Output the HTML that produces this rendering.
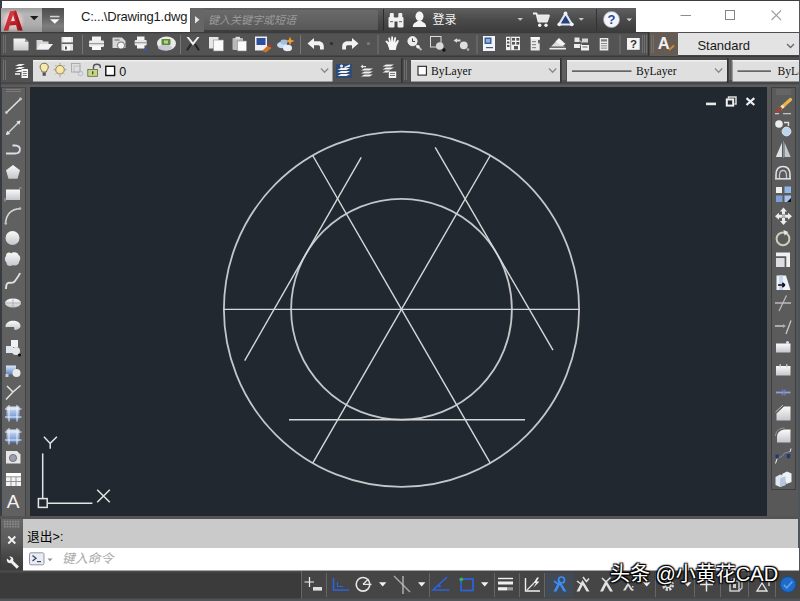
<!DOCTYPE html>
<html lang="zh-CN">
<head>
<meta charset="utf-8">
<title>AutoCAD - Drawing1.dwg</title>
<style>
html,body{margin:0;padding:0;background:#4a4a4a;}
body{width:800px;height:601px;overflow:hidden;font-family:"Liberation Sans","Noto Sans CJK SC",sans-serif;}
#app{position:relative;width:800px;height:601px;overflow:hidden;background:#585858;}
.abs{position:absolute;}
#app div,#app svg{position:absolute;}
/* title bar */
#topline{left:0;top:0;width:800px;height:1px;background:#3a3f44;}
#titlewhite{left:1px;top:1px;width:798px;height:31px;background:#fff;}
#appbtn{left:1px;top:8px;width:40.5px;height:24px;background:linear-gradient(#9c9c9c,#b6b6b6 25%,#adadad 70%,#989898);}
#qat{left:41.5px;top:8px;width:22.5px;height:24px;background:linear-gradient(#4e4e4e,#626262 40%,#7e7e7e 75%,#6e6e6e);}
#doctitle{left:81px;top:7px;height:20px;line-height:20px;font-size:13px;letter-spacing:-0.2px;color:#1a1a1a;white-space:nowrap;}
#infocenter{left:190px;top:8px;width:446px;height:24px;background:linear-gradient(#606060,#4a4a4a 50%,#3c3c3c);}
#search{left:204px;top:10px;width:174px;height:20px;background:linear-gradient(#6a6a6a,#585858);border-radius:1px;}
#searchtxt{left:208px;top:10px;height:20px;line-height:20px;font-size:11px;font-style:italic;color:#9a9a9a;white-space:nowrap;}
#login{left:432.5px;top:8.5px;height:22px;line-height:22px;font-size:12px;color:#f2f2f2;white-space:nowrap;}
#leftedge{left:0;top:0;width:1.5px;height:601px;background:#363c42;}
#rightedge{left:798px;top:32px;width:2px;height:569px;background:#4c555b;}
/* toolbars */
#tb1{left:1px;top:32px;width:798px;height:25px;background:#4e4e4e;}
#tb2{left:1px;top:57px;width:798px;height:28px;background:#4e4e4e;}
#stylebox{left:678px;top:33px;width:121px;height:22px;background:#e3e3e3;}
#styletxt{left:697.5px;top:34.5px;height:22px;line-height:22px;font-size:13px;letter-spacing:-0.05px;color:#1a1a1a;}
#layerbox{left:33px;top:60px;width:300px;height:21px;background:#dedede;}
#colorbox{left:411px;top:60px;width:148px;height:21px;background:#dedede;}
#ltbox{left:567px;top:60px;width:161px;height:21px;background:#dedede;}
#lwbox{left:733px;top:60px;width:66px;height:21px;background:#dedede;}
.mono{font-family:"Liberation Mono","Noto Sans CJK SC",monospace;}
/* canvas */
#canvas{left:30px;top:87px;width:737px;height:429px;background:#212830;}
#lefttb{left:2px;top:87px;width:24px;height:429px;background:#606060;border-right:1px solid #444;border-top:1px solid #4a4a4a;box-sizing:border-box;}
#righttb{left:771px;top:87px;width:25px;height:403px;background:#5b5b5b;border:1px solid #3f3f3f;box-sizing:border-box;}
/* command */
#cmdhandle{left:1px;top:519px;width:22.5px;height:51.5px;background:linear-gradient(#686868,#5a5a5a 45%,#444 75%,#3c3c3c);}
#cmdhist{left:23px;top:519px;width:775px;height:29px;background:#cacaca;}
#cmdin{left:23px;top:548px;width:776px;height:23px;background:#fff;}
#histtxt{left:27px;top:527px;height:20px;line-height:20px;font-size:12.7px;color:#000;white-space:nowrap;letter-spacing:0;}
#histtxt span{position:static;font-family:"Liberation Sans",sans-serif;font-size:12.5px;letter-spacing:0.3px;}
#cmdph{left:62px;top:549px;height:20px;line-height:20px;font-size:12.8px;font-style:italic;color:#a8a8a8;white-space:nowrap;}
#status{left:0;top:571px;width:800px;height:30px;background:#3b3b3b;}
#wm{left:610px;top:561px;height:26px;line-height:26px;font-size:20px;color:#fff;white-space:nowrap;text-shadow:1px 1px 1px #000,-1px -1px 1px #000,1px -1px 1px #000,-1px 1px 1px #000,0 0 3px #000;}
</style>
</head>
<body>
<div id="app">
  <div id="titlewhite"></div>
  <div id="topline"></div>
  <div id="leftedge"></div>
  <div id="rightedge"></div>
  <div id="appbtn"></div>
  <div id="qat"></div>
  <div id="doctitle">C:...\Drawing1.dwg</div>
  <div id="infocenter"></div>
  <div id="search"></div>
  <div id="searchtxt">键入关键字或短语</div>
  <div id="login">登录</div>
  <div id="tb1"></div>
  <div id="tb2"></div>
  <div id="stylebox"></div>
  <div id="styletxt">Standard</div>
  <div id="layerbox"></div>
  <div id="colorbox"></div>
  <div id="ltbox"></div>
  <div id="lwbox"></div>
  <div id="canvas"></div>
  <div id="lefttb"></div>
  <div id="righttb"></div>
  <div id="cmdhandle"></div>
  <div id="cmdhist"></div>
  <div id="cmdin"></div>
  <div id="histtxt" class="mono">退出<span>&gt;:</span></div>
  <div id="cmdph">键入命令</div>
  <div id="status"></div>
  <svg id="drawing" style="left:30px;top:87px" width="737" height="429" viewBox="30 87 737 429" fill="none" stroke="#d6d8da" stroke-width="1.4" stroke-linecap="butt">
    <circle cx="401.5" cy="309.3" r="177.6" stroke="#c4c6c9" stroke-width="1.8"/>
    <circle cx="401.5" cy="309.3" r="110.4" stroke="#c4c6c9" stroke-width="1.8"/>
    <line x1="223.9" y1="309.40000000000003" x2="579.1" y2="309.40000000000003"/>
    <line x1="312.7" y1="155.5" x2="490.3" y2="463.1"/>
    <line x1="490.3" y1="155.5" x2="312.7" y2="463.1"/>
    <line x1="361.2" y1="157.4" x2="244.7" y2="360.6"/>
    <line x1="435.2" y1="147.4" x2="553" y2="350.2"/>
    <line x1="289" y1="419.8" x2="525" y2="419.8"/>
  </svg>
  <svg id="ucs" style="left:30px;top:425px" width="100" height="91" viewBox="30 425 100 91" fill="none" stroke="#e4e4e4" stroke-width="1.5">
    <path d="M43.9 436.8 L50.2 443.4 L56.9 436.8 M50.2 443.4 V448.8"/>
    <path d="M42.7 453.4 V498.5"/>
    <rect x="38.4" y="498.6" width="8.8" height="8.8"/>
    <path d="M47.3 503.2 H92.4"/>
    <path d="M97.2 489.8 L109.8 502.2 M109.8 489.8 L97.2 502.2"/>
  </svg>
  <svg id="ic_title" style="left:0;top:0" width="800" height="33" viewBox="0 0 800 33">
    <defs>
      <linearGradient id="gA" x1="0" y1="0" x2="0" y2="1"><stop offset="0" stop-color="#d83a42"/><stop offset="1" stop-color="#a3121a"/></linearGradient>
      <radialGradient id="gGlow"><stop offset="0" stop-color="#fbe4e5" stop-opacity="0.95"/><stop offset="0.7" stop-color="#f0c8ca" stop-opacity="0.6"/><stop offset="1" stop-color="#d8b4b6" stop-opacity="0"/></radialGradient>
    </defs>
    <!-- app logo A -->
    <ellipse cx="13" cy="20.5" rx="12.5" ry="11.5" fill="url(#gGlow)"/>
    <path d="M3.8 30.6 L10.2 11.2 L16 10.4 L22.6 30.6 L17.6 30.6 L16 25 L9.6 25.6 L8.2 30.6 Z M10.9 21.3 L14.9 20.9 L13 14.6 Z" fill="url(#gA)" fill-rule="evenodd"/>
    <path d="M10.2 11.2 L16 10.4 L13 14.6 L10.9 21.3 L8.2 30.6 L3.8 30.6 Z" fill="#d93a42" opacity="0.55"/>
    <path d="M16 10.4 L22.6 30.6 L19.6 30.6 L14 12.8 Z" fill="#8e0f16" opacity="0.5"/>
    <path d="M30 16 H38.5 L34.2 20.2 Z" fill="#1c1c1c"/>
    <!-- qat dropdown -->
    <rect x="50" y="15.8" width="9.5" height="1.5" fill="#d4d4d4"/>
    <path d="M50 19.3 H59.5 L54.8 23.8 Z" fill="#fafafa"/>
    <!-- search expander -->
    <rect x="190.5" y="8" width="13.5" height="24" fill="#666"/>
    <path d="M195 16 L199.5 19.7 L195 23.4 Z" fill="#e6e6e6"/>
    <!-- separators -->
    <rect x="383" y="9" width="1" height="22" fill="#2c2c2c"/>
    <rect x="596" y="9" width="1" height="22" fill="#333"/>
    <!-- binoculars -->
    <g fill="#f0f0f0">
      <rect x="388.5" y="17" width="6" height="10.5" rx="1"/>
      <rect x="397.5" y="17" width="6" height="10.5" rx="1"/>
      <rect x="389.8" y="13" width="4" height="5" rx="1"/>
      <rect x="398.3" y="13" width="4" height="5" rx="1"/>
      <rect x="393.5" y="17.5" width="5" height="4"/>
    </g>
    <rect x="390" y="21" width="3" height="1.2" fill="#777"/><rect x="399" y="21" width="3" height="1.2" fill="#777"/>
    <!-- person -->
    <ellipse cx="419.5" cy="16.3" rx="4" ry="4.8" fill="#f4f4f4"/>
    <path d="M412.8 27 C413 22.5 416 22.8 417.6 21 H421.4 C423 22.8 426 22.5 426.2 27 Z" fill="#f4f4f4"/>
    <!-- small dropdowns -->
    <path d="M517.5 18 H523 L520.2 20.8 Z" fill="#c8c8c8"/>
    <path d="M578.5 18 H584 L581.2 20.8 Z" fill="#c8c8c8"/>
    <path d="M626.5 18.5 H632 L629.2 21.3 Z" fill="#d8d8d8"/>
    <!-- cart -->
    <path d="M533 13.5 H536.5 L538.5 21.5 H547 L549 15.5 H537.3" fill="none" stroke="#f2f2f2" stroke-width="1.8" stroke-linejoin="round"/>
    <path d="M537.6 15.5 H549 L547 21.5 H538.8 Z" fill="#e8e8e8"/>
    <circle cx="539.7" cy="25.3" r="1.7" fill="#f2f2f2"/><circle cx="546" cy="25.3" r="1.7" fill="#f2f2f2"/>
    <!-- A360 -->
    <path d="M565.5 13.5 L572 24.5 H559 Z" fill="#27407a" stroke="#dfe6f4" stroke-width="2.2" stroke-linejoin="round"/>
    <circle cx="565.5" cy="13.5" r="1.9" fill="#eef2fa"/><circle cx="559.3" cy="24.3" r="1.9" fill="#eef2fa"/><circle cx="571.8" cy="24.3" r="1.9" fill="#eef2fa"/>
    <!-- help -->
    <circle cx="611.5" cy="19.5" r="8" fill="#f3f5fa" stroke="#9aa3b8" stroke-width="0.8"/>
    <text x="611.5" y="24.3" font-family="Liberation Sans, sans-serif" font-weight="bold" font-size="13" text-anchor="middle" fill="#2748a0">?</text>
    <!-- window controls -->
    <rect x="680.5" y="15" width="10.5" height="1" fill="#8c8c8c"/>
    <rect x="725.5" y="10.5" width="9" height="9" fill="none" stroke="#858585" stroke-width="1"/>
    <path d="M771.5 10.5 L781 20 M781 10.5 L771.5 20" stroke="#a0a0a0" stroke-width="1.1"/>
  </svg>
  <svg id="ic_tb1" style="left:0;top:32px" width="800" height="26" viewBox="0 32 800 26">
    <defs>
      <linearGradient id="gW" x1="0" y1="0" x2="0" y2="1"><stop offset="0" stop-color="#f6f6f6"/><stop offset="1" stop-color="#c9c9c9"/></linearGradient>
    </defs>
    <!-- toolbar frames -->
    <rect x="1" y="32" width="648" height="24" fill="#535353"/>
    <rect x="1" y="55.5" width="798" height="1.5" fill="#3a3a3a"/>
    <rect x="1" y="32" width="677" height="1.2" fill="#3b3b3b"/>
    <rect x="649" y="32" width="29" height="24" fill="#645c54"/>
    <rect x="648" y="32" width="1.5" height="24" fill="#333"/>
    <g fill="#6f6f6f"><rect x="3" y="35" width="1" height="18"/><rect x="5" y="35" width="1" height="18"/><rect x="642" y="35" width="1" height="18"/><rect x="644" y="35" width="1" height="18"/><rect x="646" y="35" width="1" height="18"/><rect x="651" y="35" width="1" height="18"/><rect x="653" y="35" width="1" height="18"/></g>
    <!-- separators -->
    <g fill="#777"><rect x="82" y="35" width="1" height="19"/><rect x="180" y="35" width="1" height="19"/><rect x="300" y="35" width="1" height="19"/><rect x="377.5" y="35" width="1" height="19"/><rect x="476.5" y="35" width="1" height="19"/><rect x="619.5" y="35" width="1" height="19"/></g>
    <!-- new -->
    <path d="M13.5 38.5 H25 L28.5 42 V50.5 H13.5 Z" fill="url(#gW)"/><path d="M25 38.5 V42 H28.5" fill="#9a9a9a"/>
    <!-- open -->
    <path d="M36.5 40 H42 L43.5 41.5 H48.5 V49.5 H36.5 Z" fill="#d6d6d6"/><path d="M36.5 49.5 L40 44 H53 L48.5 49.5 Z" fill="#f2f2f2"/>
    <!-- save -->
    <rect x="61.5" y="37" width="11.5" height="13.5" fill="#e3e3e3"/><rect x="63.5" y="37" width="7.5" height="5" fill="#f8f8f8"/><rect x="61.5" y="42.5" width="11.5" height="1.4" fill="#555"/><rect x="64" y="45.5" width="6" height="5" fill="#fafafa"/><rect x="65" y="46.5" width="1.8" height="3" fill="#444"/>
    <!-- print -->
    <rect x="92" y="36.5" width="9" height="4.5" fill="#f2f2f2"/><rect x="89" y="40.5" width="15" height="6.5" rx="1.2" fill="#ececec"/><rect x="89" y="43.2" width="15" height="1" fill="#8a8a8a"/><rect x="92" y="46" width="9" height="4" fill="#fafafa"/>
    <!-- preview -->
    <path d="M112.5 37.5 H122 L125.5 41 V48 H112.5 Z" fill="#d8d8d8"/><circle cx="121" cy="45.5" r="3.6" fill="#f6f6f6" stroke="#555" stroke-width="0.8"/><rect x="114.5" y="39.5" width="5" height="1" fill="#666"/>
    <!-- publish -->
    <rect x="137" y="36.5" width="7.5" height="4" fill="#f2f2f2"/><rect x="134.7" y="40" width="12" height="5.5" rx="1" fill="#e8e8e8"/><rect x="134.7" y="42.3" width="12" height="0.9" fill="#888"/><rect x="137" y="44.5" width="7.5" height="4" fill="#f6f6f6"/><path d="M143 49 L147 53 L145 49 Z" fill="#3a4fb0"/><rect x="144" y="48.5" width="3" height="2" fill="#4456a8"/>
    <!-- 3dprint/globe -->
    <ellipse cx="166.5" cy="43.5" rx="9.5" ry="7" fill="#e9ebe6"/><ellipse cx="165" cy="47.5" rx="7" ry="3" fill="#c6c8d6"/><rect x="161.5" y="39" width="9" height="6" rx="1" fill="#5f8a3c"/><rect x="164" y="40.5" width="4" height="3" fill="#b9d48a"/>
    <!-- cut -->
    <path d="M186.5 37 L193 45.5 L199.5 37 L197.3 37 L193 42.3 L188.8 37 Z" fill="#f4f4f4"/><path d="M190.5 45 L187.5 49.5 M195.5 45 L198.5 49.5" stroke="#262626" stroke-width="2.2" stroke-linecap="round" fill="none"/>
    <!-- copy -->
    <rect x="209" y="37" width="9.5" height="11.5" fill="#e6e6e6"/><rect x="213.5" y="40" width="10" height="11" fill="#fafafa" stroke="#8c8c8c" stroke-width="0.6"/>
    <!-- paste -->
    <rect x="232.5" y="38" width="10.5" height="12" rx="1" fill="#b9b9b9"/><rect x="235.5" y="36.8" width="4.5" height="2.5" fill="#ddd"/><rect x="237.5" y="41" width="9" height="10" fill="#fafafa" stroke="#8c8c8c" stroke-width="0.6"/>
    <!-- matchprop -->
    <rect x="255" y="36.5" width="12" height="14" fill="#eef0f4"/><rect x="256.5" y="38" width="9" height="7" fill="#2d4f9e"/><path d="M262 51 L268 45.5 L271.5 48 L266 52.5 Z" fill="#c9762a"/><circle cx="269.5" cy="45.5" r="1.6" fill="#b03a2a"/>
    <!-- blockeditor-ish -->
    <ellipse cx="282" cy="45" rx="5" ry="3.3" fill="#c9dcf2"/><ellipse cx="287.5" cy="48" rx="4.5" ry="3.2" fill="#e6eef8"/><ellipse cx="284" cy="42" rx="3.5" ry="2.4" fill="#9fc0e6"/><path d="M290 36.5 L291.2 39.8 L294.5 41 L291.2 42.2 L290 45.5 L288.8 42.2 L285.5 41 L288.8 39.8 Z" fill="#f0a030"/>
    <!-- undo -->
    <path d="M307.5 43.5 L314 38 V41.2 H318.5 C322 41.2 323.8 43.5 323.8 46.5 V49.5 H320 V47 C320 45.8 319.3 45.2 318 45.2 H314 V49 Z" fill="#f2f2f2"/>
    <circle cx="331.5" cy="43.5" r="1.6" fill="#2e2e2e"/>
    <!-- redo -->
    <path d="M358.5 43.5 L352 38 V41.2 H347.5 C344 41.2 342.2 43.5 342.2 46.5 V49.5 H346 V47 C346 45.8 346.7 45.2 348 45.2 H352 V49 Z" fill="#f2f2f2"/>
    <circle cx="368.5" cy="43.5" r="1.6" fill="#7c7c7c"/>
    <!-- pan hand -->
    <path d="M387.5 44 L385.3 41.5 L386.6 40.4 L389 42.6 L388.2 37.8 L389.8 37.4 L391 42 L391.3 36.4 L393 36.4 L393.2 42 L394.6 37 L396.2 37.4 L395.4 42.8 L397.6 39.8 L399 40.8 L396.6 46 L395.8 50 H389.5 Z" fill="#f6f6f6"/>
    <!-- zoom realtime -->
    <circle cx="412.5" cy="41.2" r="4.6" fill="#ececec" stroke="#fff" stroke-width="0.8"/><path d="M412.5 38.5 V41.5 H415" stroke="#444" stroke-width="1" fill="none"/><path d="M416 45 L421.5 50" stroke="#bdbdbd" stroke-width="2"/><circle cx="418" cy="46.8" r="1.8" fill="#f4f4f4"/>
    <!-- zoom window -->
    <rect x="430.5" y="36.5" width="10.5" height="10.5" fill="none" stroke="#dcdcdc" stroke-width="1"/><circle cx="439.8" cy="46" r="3.8" fill="#d9d9d9"/><circle cx="444" cy="50" r="1.7" fill="#111"/>
    <!-- zoom prev -->
    <path d="M453.5 40.5 L457 38.2 V39.6 H460.5 V41.4 H457 V42.8 Z" fill="#dcdcdc"/><circle cx="463.8" cy="45.3" r="3.9" fill="#dedede"/><circle cx="468" cy="49.6" r="1.3" fill="#b0b0b0"/>
    <!-- properties -->
    <rect x="483" y="36" width="12" height="15" fill="#f3f5f8"/><rect x="484.5" y="37.5" width="7" height="6.5" fill="#39619e"/><rect x="486" y="39" width="4" height="3.5" fill="#8fb0dc"/><rect x="486" y="47" width="7" height="1.2" fill="#3a5a92"/>
    <!-- designcenter -->
    <rect x="506" y="36.7" width="14" height="13.5" fill="#f2f2f2"/><g fill="#555"><rect x="507" y="38" width="2.4" height="2"/><rect x="507" y="41.5" width="2.4" height="2"/><rect x="507" y="45" width="2.4" height="2"/><rect x="512" y="38" width="3" height="2.6"/><rect x="516.3" y="38" width="3" height="2.6"/><rect x="512" y="42" width="3" height="2.6"/><rect x="516.3" y="42" width="3" height="2.6"/><rect x="514" y="46" width="4" height="3.4"/></g><rect x="510.3" y="36.7" width="0.9" height="13.5" fill="#777"/>
    <!-- tool palettes -->
    <rect x="530.7" y="37" width="9" height="13.5" fill="#e9e9e9"/><rect x="530.7" y="37" width="9" height="2.2" fill="#fafafa"/><g fill="#8a8a8a"><rect x="532" y="41" width="4" height="1.2"/><rect x="532" y="44" width="4" height="1.2"/><rect x="532" y="47" width="4" height="1.2"/></g><rect x="538" y="40" width="2.3" height="3.4" fill="#666"/>
    <!-- sheet set -->
    <path d="M549.5 47.8 H566 V49.5 H549.5 Z" fill="#eee"/><path d="M551 46.5 L556 41.5 L565 46.5 Z" fill="#dcdcdc"/><path d="M555.5 41.5 L559 38 L565.5 44 L562 46 Z" fill="#f4f4f4"/>
    <!-- markup -->
    <rect x="574.5" y="37.5" width="5" height="4.5" fill="#e6e6e6"/><rect x="582" y="38.5" width="6" height="4" fill="#d6d6d6"/><rect x="574" y="44" width="6" height="4" fill="#ededed"/><rect x="581" y="45" width="8" height="5.5" fill="#f0f0f0"/><rect x="582.5" y="46.5" width="5" height="1" fill="#666"/><path d="M579 40 L582 42.5 M579 46 L582 44" stroke="#ccc" stroke-width="1"/>
    <!-- calc -->
    <rect x="599.7" y="38" width="8.6" height="12.5" fill="#ececec"/><rect x="601" y="39.3" width="6" height="2.2" fill="#7a7a7a"/><g fill="#8a8a8a"><rect x="601" y="43" width="6" height="1"/><rect x="601" y="45.3" width="6" height="1"/><rect x="601" y="47.6" width="6" height="1"/></g>
    <!-- help -->
    <rect x="627" y="38" width="12.7" height="11.8" fill="#f4f4f4"/>
    <text x="633.4" y="48.3" font-family="Liberation Sans, sans-serif" font-weight="bold" font-size="11.5" text-anchor="middle" fill="#333">?</text>
    <!-- text style A -->
    <text x="657.8" y="49" font-family="Liberation Sans, sans-serif" font-size="16.5" font-weight="bold" fill="#f1f1f1">A</text>
    <path d="M669 50 L674 45.5" stroke="#d08a30" stroke-width="1.8"/>
    <!-- style combo chevron -->
    <path d="M787 44 L790.5 47.5 L794 44" fill="none" stroke="#666" stroke-width="1.3"/>
  </svg>
  <svg id="ic_tb2" style="left:0;top:57px" width="800" height="30" viewBox="0 57 800 30">
    <!-- frame -->
    <rect x="1" y="57" width="400" height="26" fill="#525252"/>
    <rect x="1" y="82" width="798" height="2.5" fill="#484848"/>
    <rect x="1" y="84.5" width="798" height="2.5" fill="#5c5c5c"/>
    <g fill="#707070"><rect x="3" y="60" width="1" height="20"/><rect x="5" y="60" width="1" height="20"/></g>
    <rect x="401" y="58" width="1.5" height="25" fill="#333"/><rect x="404" y="60" width="1" height="20" fill="#707070"/><rect x="406" y="60" width="1" height="20" fill="#707070"/>
    <rect x="560" y="58" width="1.5" height="25" fill="#333"/><rect x="562.5" y="60" width="1" height="20" fill="#707070"/><rect x="564.5" y="60" width="1" height="20" fill="#707070"/>
    <rect x="727" y="58" width="1.5" height="25" fill="#333"/><rect x="729.3" y="60" width="1" height="20" fill="#707070"/><rect x="731" y="60" width="1" height="20" fill="#707070"/>
    <!-- combos -->
    <g fill="#dfdfdf"><rect x="33" y="60" width="299.5" height="21.5"/><rect x="411" y="60" width="149" height="21.5"/><rect x="567" y="60" width="159.5" height="21.5"/><rect x="732.5" y="60" width="66.5" height="21.5"/></g>
    <g fill="#efefef"><rect x="33" y="60" width="299.5" height="1.5"/><rect x="411" y="60" width="149" height="1.5"/><rect x="567" y="60" width="159.5" height="1.5"/><rect x="732.5" y="60" width="66.5" height="1.5"/></g>
    <!-- layer props icon -->
    <g fill="#f0f0f0"><path d="M15 66 L19 64 L25 64 L21 66 Z"/><path d="M15 69 L19 67 L25 67 L21 69 Z"/><path d="M15 72 L19 70 L23 70 L21 72 Z"/><rect x="15" y="73.2" width="5" height="1.6"/></g>
    <rect x="21.5" y="69" width="6.5" height="9" fill="#f6f6f6"/><g fill="#6a6a6a"><rect x="22.8" y="71" width="4" height="0.9"/><rect x="22.8" y="73" width="4" height="0.9"/><rect x="22.8" y="75" width="4" height="0.9"/></g>
    <!-- bulb -->
    <path d="M44.2 63.2 C47 63.2 48.3 65.2 48.3 67 C48.3 69 46.6 70 46.3 72 H42.1 C41.8 70 40.1 69 40.1 67 C40.1 65.2 41.4 63.2 44.2 63.2 Z" fill="#f7e9ae" stroke="#5a5030" stroke-width="0.8"/><rect x="42.6" y="72.4" width="3.2" height="3.4" fill="#555"/>
    <!-- sun -->
    <circle cx="60" cy="69.7" r="4.3" fill="#f6e7a8" stroke="#7c6a30" stroke-width="0.8"/>
    <g stroke="#a89a68" stroke-width="0.9"><path d="M60 63 V64.5 M60 75 V76.5 M53.5 69.7 H55 M65 69.7 H66.5 M55.3 65 L56.4 66.1 M63.6 73.3 L64.7 74.4 M55.3 74.4 L56.4 73.3 M63.6 66.1 L64.7 65"/></g>
    <rect x="59" y="76" width="2" height="1.5" fill="#d8b8f0"/>
    <!-- vp freeze (faint) -->
    <rect x="71.5" y="63.5" width="8.5" height="8.5" fill="none" stroke="#a8a8a8" stroke-width="0.9"/><rect x="74" y="66" width="6" height="6" fill="none" stroke="#b6b6b6" stroke-width="0.8"/><circle cx="80.5" cy="73.5" r="2.3" fill="none" stroke="#b0b6c8" stroke-width="0.9"/>
    <!-- lock -->
    <path d="M93.5 69.5 V66.8 C93.5 63.4 100.3 63.4 100.3 66.8 V68" fill="none" stroke="#555" stroke-width="1.4"/><rect x="87.8" y="69.5" width="9.6" height="6.8" fill="#c5d58b" stroke="#5f6a3a" stroke-width="0.8"/><rect x="92" y="71.3" width="1.4" height="3" fill="#4a5230"/>
    <!-- color swatch -->
    <rect x="105.8" y="66.3" width="8.8" height="9.2" fill="#fff" stroke="#111" stroke-width="1.4"/>
    <text x="119.3" y="76" font-family="Liberation Sans, sans-serif" font-size="12.5" fill="#111">0</text>
    <!-- chevrons -->
    <g fill="none" stroke="#8a8a8a" stroke-width="1.3"><path d="M321 68.5 L324.6 72.2 L328.2 68.5"/><path d="M549 68.5 L552.6 72.2 L556.2 68.5"/><path d="M715 68.5 L718.6 72.2 L722.2 68.5"/></g>
    <!-- layer icons -->
    <rect x="336" y="64" width="15.7" height="14" fill="#2c4a7a"/>
    <g fill="#f2f2f2"><path d="M337.5 70 L341 68 L350 68 L346.5 70 Z"/><path d="M337.5 73 L341 71 L350 71 L346.5 73 Z"/><path d="M337.5 76 L341 74 L350 74 L346.5 76 Z"/><circle cx="341.5" cy="66" r="1.5"/><path d="M344 67 L350 64.5 V66.5 L345 68 Z"/></g>
    <g fill="#f2f2f2"><path d="M361 70.5 L364.5 68.5 L373 68.5 L369.5 70.5 Z"/><path d="M361 73.5 L364.5 71.5 L373 71.5 L369.5 73.5 Z"/><path d="M361 76.5 L364.5 74.5 L373 74.5 L369.5 76.5 Z"/></g><path d="M360.5 66.5 L363 64.5 V66 H366 V67.2 H363 V68.5 Z" fill="#e6e6e6"/>
    <g fill="#f2f2f2"><path d="M382.5 66.5 L386 64.5 L394 64.5 L390.5 66.5 Z"/><path d="M382.5 69.5 L386 67.5 L394 67.5 L390.5 69.5 Z"/><path d="M382.5 72.5 L386 70.5 L390 70.5 L388 72.5 Z"/></g><rect x="388.8" y="71.5" width="7.4" height="6.5" fill="#f4f4f4"/><g fill="#6a6a6a"><rect x="390" y="73" width="5" height="0.9"/><rect x="390" y="75" width="5" height="0.9"/></g>
    <!-- color combo -->
    <rect x="418" y="66.3" width="8.4" height="8.8" fill="#fff" stroke="#222" stroke-width="1.1"/>
    <text x="431" y="75" font-family="Liberation Serif, serif" font-size="12" textLength="40.5" lengthAdjust="spacingAndGlyphs" fill="#111">ByLayer</text>
    <!-- linetype -->
    <rect x="572" y="70.5" width="59.5" height="1.2" fill="#333"/>
    <text x="636" y="75" font-family="Liberation Serif, serif" font-size="12" textLength="40.5" lengthAdjust="spacingAndGlyphs" fill="#111">ByLayer</text>
    <!-- lineweight -->
    <rect x="737.5" y="70.5" width="33.5" height="1.2" fill="#333"/>
    <svg x="776" y="60" width="22.5" height="22" viewBox="776 60 22.5 22"><text x="777.5" y="75" font-family="Liberation Serif, serif" font-size="12" textLength="40.5" lengthAdjust="spacingAndGlyphs" fill="#111">ByLayer</text></svg>
  </svg>
  <svg id="ic_left" style="left:0;top:86px" width="30" height="432" viewBox="0 86 30 432">
    <defs>
      <linearGradient id="gB" x1="0" y1="0" x2="0" y2="1"><stop offset="0" stop-color="#dfe9f7"/><stop offset="1" stop-color="#5d86c8"/></linearGradient>
      <linearGradient id="gS" x1="0" y1="0" x2="0" y2="1"><stop offset="0" stop-color="#fafafa"/><stop offset="1" stop-color="#c4c6cc"/></linearGradient>
    </defs>
    <g fill="#7a7a7a"><rect x="6" y="89" width="15" height="1"/><rect x="6" y="91" width="15" height="1"/></g>
    <!-- line -->
    <path d="M6 113 L21 98.5" stroke="#e2e2e2" stroke-width="1.6"/><circle cx="6.5" cy="112.5" r="1.4" fill="#c9c9c9"/><circle cx="20.5" cy="99" r="1.4" fill="#c9c9c9"/>
    <!-- xline -->
    <path d="M6.5 134.5 L20 121" stroke="#cfd3e2" stroke-width="1.5"/><path d="M20.5 120.5 L16.3 121.6 L19.4 124.7 Z" fill="#e6e6e6"/><path d="M6 135 L10.2 133.9 L7.1 130.8 Z" fill="#e6e6e6"/>
    <!-- pline -->
    <path d="M6 153.5 H15 C21.5 153.5 21.5 145.5 15.5 145.5 H12.5" fill="none" stroke="#dadde8" stroke-width="1.8"/>
    <!-- polygon -->
    <path d="M13 165 L20 170.3 L17.5 178.7 H8.5 L6 170.3 Z" fill="url(#gS)"/>
    <!-- rectangle -->
    <rect x="6" y="189.5" width="14" height="10.5" fill="url(#gS)"/><path d="M5 201.5 V198 M19 188 H21.5" stroke="#9ab" stroke-width="1"/>
    <!-- arc -->
    <path d="M5.5 224 C6 214 11 209 20.5 208.5" fill="none" stroke="#d9d9d9" stroke-width="1.6"/><circle cx="5.8" cy="223.5" r="1.3" fill="#bbb"/><circle cx="20" cy="208.6" r="1.3" fill="#bbb"/>
    <!-- circle -->
    <circle cx="12.5" cy="238" r="7" fill="url(#gS)"/>
    <!-- revcloud -->
    <path d="M6 256 C6 252 10 252 11 253.5 C13 251.5 18 252 18.5 255 C21 256 20.5 260.5 19 261.5 C19.5 265 15 266.5 13 265 C10.5 267 6 266 6.5 262.5 C4.5 261 4.5 257.5 6 256 Z" fill="url(#gS)"/>
    <!-- spline -->
    <path d="M6 289 C6 278 12 286 15 281 C17.5 277 19 276 20 273" fill="none" stroke="#e0e0e0" stroke-width="1.9"/>
    <!-- ellipse -->
    <ellipse cx="13" cy="303" rx="8" ry="4.6" fill="url(#gS)"/><path d="M5 303 H21 M13 298 V308" stroke="#99a" stroke-width="0.6"/>
    <!-- ellipse arc -->
    <path d="M5.5 326.5 C5.5 319 20.5 319 20.5 326 C20.5 328.5 17 330 14.5 330 L14 327 H8 C6.5 327 5.5 327.5 5.5 326.5 Z" fill="url(#gS)"/>
    <!-- insert -->
    <rect x="11" y="340" width="7" height="7" fill="#f2f2f2"/><rect x="6" y="346" width="7" height="7" fill="#dfe6f2"/><circle cx="16" cy="351" r="4" fill="#e6e6e6"/><circle cx="19.5" cy="355" r="1.6" fill="#111"/>
    <!-- make block -->
    <rect x="6" y="365.5" width="10" height="9" fill="url(#gB)"/><circle cx="16.5" cy="373" r="4" fill="#e9e9e9"/><rect x="5.5" y="374" width="3" height="3" fill="#ccc"/>
    <!-- point -->
    <path d="M6 399.5 L13 392 L20.5 385.5 M7 386 L13 392" stroke="#e2e2e2" stroke-width="1.5" fill="none"/>
    <!-- hatch -->
    <rect x="6.5" y="406.5" width="13" height="13" fill="url(#gB)"/><path d="M5 409 H21.5 M5 417 H21.5 M9 405 V421.5 M17 405 V421.5" stroke="#eef2fa" stroke-width="1"/>
    <!-- gradient -->
    <rect x="6.5" y="429.5" width="13" height="13" fill="url(#gB)"/><path d="M5 432 H21.5 M5 440 H21.5 M9 428 V444.5 M17 428 V444.5" stroke="#e8eefa" stroke-width="1"/>
    <!-- region -->
    <path d="M6 451 H17 L20.5 454.5 V463.5 H6 Z" fill="#e6e6e6"/><circle cx="13" cy="458" r="3.6" fill="#9a9fb0" stroke="#666" stroke-width="0.8"/>
    <!-- table -->
    <rect x="6" y="473" width="15" height="13" fill="#f3f3f3"/><rect x="6" y="473" width="15" height="3.3" fill="#fff"/><path d="M6 476.8 H21 M6 481.5 H21 M11 477 V486 M16 477 V486" stroke="#8a8a8a" stroke-width="0.9"/>
    <!-- text A -->
    <text x="13.2" y="507.8" font-family="Liberation Sans, sans-serif" font-size="19" text-anchor="middle" fill="#f4f4f4">A</text>
  </svg>
  <svg id="ic_right" style="left:700px;top:86px" width="100" height="410" viewBox="700 86 100 410">
    <!-- viewport controls -->
    <rect x="706" y="102.6" width="10" height="2.6" fill="#e8e8e8"/>
    <path d="M728.5 98.6 V97 H736 V104 H734.4" fill="none" stroke="#dcdcdc" stroke-width="1.5"/><rect x="726.8" y="99.4" width="6.4" height="6.2" fill="none" stroke="#f0f0f0" stroke-width="2"/>
    <path d="M746.5 98.2 L754.3 105 M754.3 98.2 L746.5 105" stroke="#efefef" stroke-width="2.2"/>
    <!-- grip -->
    <g fill="#717171"><rect x="776" y="89.5" width="15" height="1"/><rect x="776" y="91.5" width="15" height="1"/><rect x="776" y="93.5" width="15" height="1"/></g>
    <!-- erase -->
    <path d="M781 108 L790.5 99.5" stroke="#e8b64a" stroke-width="3.2" stroke-linecap="round"/><path d="M777 111.5 L781.5 107.5" stroke="#a8402e" stroke-width="3" stroke-linecap="round"/><path d="M783.5 105.8 L781.6 107.6" stroke="#efe6d2" stroke-width="3.2"/><rect x="775" y="113" width="4" height="1.3" fill="#c9c9c9"/><rect x="783" y="113" width="8" height="1.3" fill="#bfbfbf"/>
    <!-- copy -->
    <circle cx="779" cy="124" r="3.8" fill="#ededed"/><circle cx="786.5" cy="131.5" r="4.4" fill="#bcd4ee" stroke="#e8eef6" stroke-width="0.8"/><path d="M784 122.5 H788.5 V126" fill="none" stroke="#e0e0e0" stroke-width="1.4"/>
    <!-- mirror -->
    <path d="M782 142.5 V157 H775.8 Z" fill="#e2e2e2"/><path d="M784.5 142.5 V157 H790.7 Z" fill="#c3c7d2"/><rect x="783" y="141" width="0.8" height="17" fill="#8899bb"/>
    <!-- offset -->
    <path d="M776 179 V175 C776 169 779 166.5 783 166.5 C787 166.5 790 169 790 175 V179" fill="none" stroke="#e2e2e2" stroke-width="1.6"/><path d="M779.5 179 V175.5 C779.5 172 781 170.5 783 170.5 C785 170.5 786.5 172 786.5 175.5 V179" fill="none" stroke="#c2c6d6" stroke-width="1.3"/><rect x="775" y="178" width="16" height="1.6" fill="#dcdcdc"/>
    <!-- array -->
    <rect x="776" y="187" width="6" height="6" fill="#f0f0f0"/><rect x="784.5" y="186.5" width="6.5" height="6.5" fill="#8fb6e4"/><rect x="776" y="195.5" width="6.5" height="6.5" fill="#7aa0d6"/><rect x="784.5" y="195.5" width="6.5" height="6.5" fill="#a9c4ea"/><path d="M791 202 V198 L787 202 Z" fill="#111"/>
    <!-- move -->
    <g fill="#ececec"><path d="M783.5 207.5 L787 211.5 H785 V214.5 H782 V211.5 H780 Z"/><path d="M783.5 225 L787 221 H785 V218 H782 V221 H780 Z"/><path d="M775 216.3 L779 212.8 V214.8 H782 V217.8 H779 V219.8 Z"/><path d="M792 216.3 L788 212.8 V214.8 H785 V217.8 H788 V219.8 Z"/></g><circle cx="783.5" cy="216.3" r="1.8" fill="#b9b9b9"/>
    <!-- rotate -->
    <circle cx="783" cy="238.8" r="6.4" fill="none" stroke="#cfcdb8" stroke-width="2"/><path d="M783.5 230 L788.3 232 L784.6 235.6 Z" fill="#e6e6e6"/>
    <!-- scale -->
    <path d="M776 252.5 H790 V267 H786.3 V256.2 H776 Z" fill="#f0f0f0"/><rect x="776" y="258" width="8.6" height="9" fill="#dcdde2"/>
    <!-- stretch -->
    <path d="M776.5 275.5 H786 L790.5 290 H776.5 Z" fill="#eef2fa"/><path d="M779 275.5 H783 V290 H779 Z" fill="#c6d6ee"/><path d="M778 285 H785 M785 285 L782.3 282.8 M785 285 L782.3 287.2" stroke="#111" stroke-width="1.6" fill="none"/>
    <!-- trim -->
    <path d="M775 303 H791" stroke="#d2d2d2" stroke-width="1.2"/><path d="M779 311 L786.5 295.5" stroke="#bfbfbf" stroke-width="1.2"/>
    <!-- extend -->
    <path d="M775 326 H784" stroke="#dadada" stroke-width="1.3"/><path d="M786 334 L791 320.5" stroke="#c8c8c8" stroke-width="1.3"/><path d="M783 324 L786 326 L783 328 Z" fill="#aab"/>
    <!-- break at point -->
    <rect x="776" y="343.5" width="14.5" height="9" fill="url(#gS)"/><circle cx="787.5" cy="342.5" r="1.5" fill="#dfe3f0"/>
    <!-- break -->
    <rect x="776" y="366" width="14.5" height="9.5" fill="url(#gS)"/><rect x="779.5" y="364.2" width="1.4" height="3" fill="#ccd"/><rect x="786" y="364.2" width="1.4" height="3" fill="#ccd"/>
    <!-- join -->
    <path d="M776 392.5 H790.5" stroke="#8ea0dc" stroke-width="1.8"/><path d="M782 389.5 L784 392.5 L782 395.5 M785.5 389.5 L783.5 392.5 L785.5 395.5" stroke="#6f80c8" stroke-width="1.2" fill="none"/>
    <!-- chamfer -->
    <path d="M776.5 420.5 V413.5 L784 406.5 H790.5 V420.5 Z" fill="url(#gS)"/><path d="M775.5 412 L783 405" stroke="#bbb" stroke-width="1"/>
    <!-- fillet -->
    <path d="M777 442.5 V437 C777 432 781 429.5 786 429.5 H790.5 V442.5 Z" fill="url(#gS)"/><path d="M775.5 436 C775.8 431 779 428.3 784.5 428" stroke="#999" stroke-width="1" fill="none"/>
    <!-- blend -->
    <path d="M776 462 C777 455 781 459 783 455 C785 451 789 454 791 449.5" stroke="#7d8fb8" stroke-width="1" fill="none"/><rect x="775.5" y="454.5" width="3.2" height="3.6" fill="#26386a"/><rect x="786.8" y="454" width="3.4" height="4.2" fill="#26386a"/><path d="M775.5 463.5 L777 459" stroke="#e6e6e6" stroke-width="1"/><path d="M790 452 L791 448.5" stroke="#e6e6e6" stroke-width="1"/>
    <!-- explode -->
    <path d="M775.5 477 L780 474.5 L785.5 476 V485 L780 487 L775.5 485 Z" fill="#dfe6f0"/><path d="M782 474 L787 471.5 L791.5 473.5 V482 L786.5 484 Z" fill="#eef1f6"/><path d="M780 478.5 L785.5 476.2 V485 L780 487 Z" fill="#b7c6dc"/>
  </svg>
  <svg id="ic_bottom" style="left:0;top:516px" width="800" height="85" viewBox="0 516 800 85">
    <!-- band below canvas -->
    <rect x="0" y="515.5" width="800" height="3.5" fill="#545454"/>
    <!-- cmd handle -->
    <g fill="#8c8c8c"><rect x="4.0" y="520.8" width="1.7" height="1.7"/><rect x="6.7" y="520.8" width="1.7" height="1.7"/><rect x="9.4" y="520.8" width="1.7" height="1.7"/><rect x="12.100000000000001" y="520.8" width="1.7" height="1.7"/><rect x="14.8" y="520.8" width="1.7" height="1.7"/><rect x="17.5" y="520.8" width="1.7" height="1.7"/><rect x="4.0" y="523.3" width="1.7" height="1.7"/><rect x="6.7" y="523.3" width="1.7" height="1.7"/><rect x="9.4" y="523.3" width="1.7" height="1.7"/><rect x="12.100000000000001" y="523.3" width="1.7" height="1.7"/><rect x="14.8" y="523.3" width="1.7" height="1.7"/><rect x="17.5" y="523.3" width="1.7" height="1.7"/><rect x="4.0" y="525.8" width="1.7" height="1.7"/><rect x="6.7" y="525.8" width="1.7" height="1.7"/><rect x="9.4" y="525.8" width="1.7" height="1.7"/><rect x="12.100000000000001" y="525.8" width="1.7" height="1.7"/><rect x="14.8" y="525.8" width="1.7" height="1.7"/><rect x="17.5" y="525.8" width="1.7" height="1.7"/></g>
    <path d="M8.3 536.5 L15.3 543.5 M15.3 536.5 L8.3 543.5" stroke="#f2f2f2" stroke-width="1.9"/>
    <path d="M7 558.5 C6 561.5 8.5 564 11 563 L16.8 568.8 L19 566.6 L13.2 561 C14.2 558.5 12.2 556 9.2 556.5 L11.2 558.8 L9.5 560.6 Z" fill="#f0f0f0"/>
    <!-- cmd prompt icon -->
    <rect x="29.5" y="552.8" width="14.5" height="12" rx="1.5" fill="#e9ecf2" stroke="#8d96a8" stroke-width="1"/><path d="M32.5 555.5 L36 558.3 L32.5 561" fill="none" stroke="#3a4a66" stroke-width="1.3"/><rect x="37" y="561" width="4" height="1.2" fill="#3a4a66"/>
    <path d="M47.5 558.5 H52.5 L50 561.3 Z" fill="#8c8c8c"/>
    <!-- status bar -->
    <rect x="0" y="570.5" width="800" height="2" fill="#4c4c4c"/><rect x="302" y="571" width="498" height="28" fill="#454545"/><rect x="301" y="571" width="1" height="28" fill="#666"/>
    <rect x="0" y="598.5" width="800" height="2.5" fill="#505357"/>
    <g fill="#666"><rect x="326" y="573" width="1" height="24"/><rect x="429" y="573" width="1" height="24"/><rect x="494" y="573" width="1" height="24"/><rect x="519" y="573" width="1" height="24"/><rect x="544" y="573" width="1" height="24"/><rect x="655" y="573" width="1" height="24"/><rect x="694" y="573" width="1" height="24"/><rect x="720" y="573" width="1" height="24"/><rect x="748" y="573" width="1" height="24"/><rect x="775" y="573" width="1" height="24"/></g>
    <!-- dyn input -->
    <path d="M309.5 577 V587 M304.5 582 H314" stroke="#f0f0f0" stroke-width="1.2"/><rect x="313" y="587" width="9" height="3.6" fill="#dedede"/>
    <!-- ortho -->
    <path d="M333.5 578 V590 H349" fill="none" stroke="#2c63e0" stroke-width="1.6"/><path d="M337.5 582 V586.5 H343" fill="none" stroke="#2c63e0" stroke-width="1.1"/>
    <!-- polar -->
    <circle cx="363" cy="584.3" r="6.8" fill="none" stroke="#e6e6e6" stroke-width="1.6"/><path d="M363 584.3 H371.5 M363 584.3 L368.5 579" stroke="#e6e6e6" stroke-width="1.3"/>
    <path d="M379 582.3 H386.4 L382.7 586.6 Z" fill="#f2f2f2"/>
    <!-- isodraft -->
    <path d="M394 576 L410 592" stroke="#a8a8a8" stroke-width="1.5"/><path d="M403 576 V594" stroke="#c8c8c8" stroke-width="1.2"/>
    <path d="M418 582.3 H425.4 L421.7 586.6 Z" fill="#f2f2f2"/>
    <!-- otrack -->
    <path d="M447 577 L433 590 H449.5" fill="none" stroke="#2c63e0" stroke-width="1.6"/><circle cx="439.5" cy="586" r="1.3" fill="#2c63e0"/>
    <!-- osnap -->
    <rect x="461" y="579" width="12" height="11.5" fill="none" stroke="#2c63e0" stroke-width="1.7"/><circle cx="461.3" cy="579.3" r="1.9" fill="#3fae4a"/>
    <path d="M481 582.3 H488.4 L484.7 586.6 Z" fill="#f2f2f2"/>
    <!-- lineweight -->
    <rect x="498" y="577.8" width="15" height="1.4" fill="#f0f0f0"/><rect x="498" y="581.5" width="15" height="3" fill="#f0f0f0"/><rect x="498" y="587.2" width="9.5" height="3.2" fill="#f0f0f0"/><rect x="507.5" y="587.2" width="5.5" height="3.2" fill="#9a9a9a"/>
    <!-- transparency-ish -->
    <path d="M525.5 578 V591 H540" fill="none" stroke="#f0f0f0" stroke-width="1.4"/><path d="M527 590 L534 583" stroke="#e4e4e4" stroke-width="1.2"/><path d="M537 577.5 L533.5 583 H536 L533.5 587.5 L539.5 581.5 H536.6 L539 577.5 Z" fill="#f0f0f0"/>
    <!-- anno blue -->
    <rect x="546" y="573" width="27" height="24" fill="#414b58"/>
    <path d="M553.5 591.5 L559.5 580 L566.5 591.5 L563.5 591.5 L559.8 585 L556.5 591.5 Z" fill="#3d8cf4"/><circle cx="561.5" cy="580" r="3" fill="none" stroke="#3d8cf4" stroke-width="1.7"/><path d="M554 581 L558 584" stroke="#3d8cf4" stroke-width="1.6"/>
    <!-- anno white 1 -->
    <path d="M576.5 591.5 L582.5 580 L589.5 591.5 L586.5 591.5 L582.8 585 L579.5 591.5 Z" fill="#e2e2e2"/><path d="M583 577 L586 581 M589 578.5 L586 582" stroke="#e2e2e2" stroke-width="1.5"/><path d="M577 581 L581 584" stroke="#e2e2e2" stroke-width="1.5"/>
    <!-- anno white 2 -->
    <path d="M600 591.5 L606 580 L613 591.5 L610 591.5 L606.3 585 L603 591.5 Z" fill="#e2e2e2"/><path d="M602 578 L606 582 L610.5 577.5" stroke="#e2e2e2" stroke-width="1.5" fill="none"/>
    <!-- scale -->
    <path d="M623 590.5 L628 582.5 L633.5 590.5 L631 590.5 L628.2 586 L625.5 590.5 Z" fill="#d8d8d8"/><rect x="632" y="586" width="1.4" height="1.4" fill="#ddd"/><rect x="632" y="589" width="1.4" height="1.4" fill="#ddd"/>
    <path d="M643 582.3 H650.4 L646.7 586.6 Z" fill="#f2f2f2"/>
    <!-- gear -->
    <circle cx="668" cy="585" r="4.6" fill="none" stroke="#dedede" stroke-width="2.6" stroke-dasharray="2.2 1.4"/><circle cx="668" cy="585" r="2.6" fill="none" stroke="#dedede" stroke-width="1.4"/>
    <path d="M684 582.3 H691.4 L687.7 586.6 Z" fill="#f2f2f2"/>
    <!-- plus -->
    <path d="M706.5 578 V591.5 M700 584.5 H713" stroke="#e8e8e8" stroke-width="1.5"/>
    <!-- square iso -->
    <rect x="730" y="581" width="9" height="10" fill="none" stroke="#e0e0e0" stroke-width="1.3"/><path d="M730 581 L733 578 H742 V588 L739 591" fill="none" stroke="#d0d0d0" stroke-width="1.1"/><rect x="733" y="584" width="3" height="4" fill="#d0d0d0"/>
    <!-- clean screen / isolate -->
    <path d="M757 591 L762 583 L767 591 Z" fill="none" stroke="#e2e2e2" stroke-width="1.4"/><path d="M764 579 H769 V586" fill="none" stroke="#e2e2e2" stroke-width="1.3"/><circle cx="762" cy="580" r="1.5" fill="#e2e2e2"/>
    <!-- blue circle -->
    <circle cx="788" cy="584.5" r="7.8" fill="#1e6cc8"/><circle cx="788" cy="584.5" r="7.8" fill="none" stroke="#164f96" stroke-width="1"/><path d="M783.8 584.8 L786.8 587.8 L792.3 581.6" fill="none" stroke="#5aa0ee" stroke-width="1.7"/>
  </svg>
  <!--ICONS7-->
  <div id="wm">头条 @小黄花CAD</div>
</div>
</body>
</html>
